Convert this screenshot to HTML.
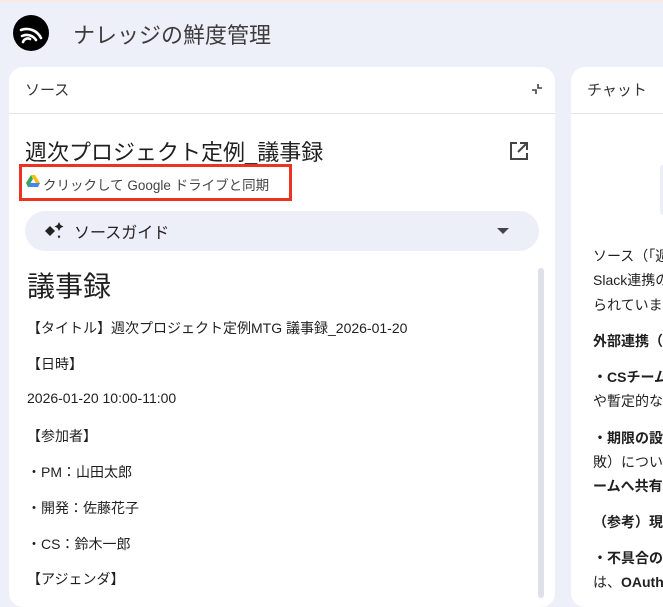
<!DOCTYPE html>
<html><head><meta charset="utf-8"><style>
*{margin:0;padding:0;box-sizing:border-box}
body{width:663px;height:587px;overflow:hidden;background:#eef0f9;font-family:"Liberation Sans","Noto Sans CJK JP",sans-serif;color:#1f1f1f;position:relative}
.a{position:absolute;white-space:nowrap}
.panel{position:absolute;background:#fff;border-radius:14px}
.t{font-size:14px;color:#1f1f1f}
</style></head><body>
<div class="a" style="left:0;top:0;width:663px;height:2px;background:#fbe9e4"></div>
<div class="a" style="left:13px;top:15px;width:36px;height:36px;border-radius:50%;background:#000;overflow:hidden">
<svg width="36" height="36" viewBox="0 0 36 36"><g fill="none" stroke="#fff" stroke-width="2.6" stroke-linecap="round"><path d="M10 27 A5 5 0 0 1 17 24"/><path d="M9 21 A11 11 0 0 1 23 25"/><path d="M8 15 A16 16 0 0 1 28 23"/></g></svg></div>
<div class="a" style="left:73px;top:18px;font-size:22px;color:#3c3c3c">ナレッジの鮮度管理</div>

<div class="panel" style="left:9px;top:67px;width:546px;height:540px"></div>
<div class="a" style="left:25px;top:79px;font-size:15px;color:#333">ソース</div>
<svg class="a" style="left:531px;top:83px" width="12" height="12" viewBox="0 0 12 12"><path d="M1 7h4v4M11 5H7V1" fill="none" stroke="#444" stroke-width="1.6"/></svg>
<div class="a" style="left:9px;top:113px;width:546px;height:1px;background:#e2e3ec"></div>
<div class="a" style="left:25px;top:135px;font-size:22px;color:#1f1f1f">週次プロジェクト定例_議事録</div>
<svg class="a" style="left:509px;top:141px" width="20" height="20" viewBox="0 0 20 20"><path d="M8 2H2v16h16v-6" fill="none" stroke="#444" stroke-width="2"/><path d="M11 2h7v7M18 2L9 11" fill="none" stroke="#444" stroke-width="2"/></svg>
<div class="a" style="left:19px;top:164px;width:273px;height:37px;border:3px solid #ea3323"></div>
<svg class="a" style="left:26px;top:175px" width="14" height="12" viewBox="0 0 14 12"><path d="M5 0h4l5 8h-4z" fill="#fbbc04"/><path d="M5 0L0 8l2 4 5-8z" fill="#34a853"/><path d="M2 12h10l2-4H4z" fill="#4285f4"/></svg>
<div class="a" style="left:43px;top:174px;font-size:13.5px;color:#444">クリックして Google ドライブと同期</div>
<div class="a" style="left:25px;top:211px;width:514px;height:40px;border-radius:20px;background:#eceef8"></div>
<svg class="a" style="left:43px;top:220px" width="22" height="22" viewBox="0 0 22 22"><path d="M7 6l5 5-5 5-5-5z" fill="#222"/><path d="M16 2l1.5 3 3 1.5-3 1.5L16 11l-1.5-3-3-1.5 3-1.5z" fill="#222"/><path d="M16 15l1.3 1.7L16 18.4l-1.3-1.7z" fill="#222"/></svg>
<div class="a" style="left:74px;top:219px;font-size:16px;color:#222">ソースガイド</div>
<div class="a" style="left:497px;top:228px;width:0;height:0;border-left:6px solid transparent;border-right:6px solid transparent;border-top:6px solid #444"></div>
<div class="a" style="left:538px;top:268px;width:6px;height:330px;border-radius:3px;background:#dfe1ea"></div>
<div class="a" style="left:27px;top:265px;font-size:28px;color:#1f1f1f">議事録</div>
<div class="a t" style="left:27px;top:318px">【タイトル】週次プロジェクト定例MTG 議事録_2026-01-20</div>
<div class="a t" style="left:27px;top:354px">【日時】</div>
<div class="a t" style="left:27px;top:390px">2026-01-20 10:00-11:00</div>
<div class="a t" style="left:27px;top:426px">【参加者】</div>
<div class="a t" style="left:27px;top:462px">・PM：山田太郎</div>
<div class="a t" style="left:27px;top:498px">・開発：佐藤花子</div>
<div class="a t" style="left:27px;top:534px">・CS：鈴木一郎</div>
<div class="a t" style="left:27px;top:569px">【アジェンダ】</div>

<div class="panel" style="left:571px;top:67px;width:120px;height:540px"></div>
<div class="a" style="left:587px;top:79px;font-size:15px;color:#333">チャット</div>
<div class="a" style="left:571px;top:113px;width:92px;height:1px;background:#e2e3ec"></div>
<div class="a" style="left:660px;top:164px;width:10px;height:52px;border-radius:6px;background:#eceef8"></div>
<div class="a t" style="left:593px;top:246px">ソース（「週</div>
<div class="a t" style="left:593px;top:270px">Slack連携の</div>
<div class="a t" style="left:593px;top:295px">られていま</div>
<div class="a t" style="left:593px;top:331px;font-weight:bold">外部連携（</div>
<div class="a t" style="left:593px;top:367px;font-weight:bold">・CSチーム</div>
<div class="a t" style="left:593px;top:391px">や暫定的な</div>
<div class="a t" style="left:593px;top:428px;font-weight:bold">・期限の設</div>
<div class="a t" style="left:593px;top:452px">敗）につい</div>
<div class="a t" style="left:593px;top:476px;font-weight:bold">ームへ共有</div>
<div class="a t" style="left:593px;top:512px;font-weight:bold">（参考）現</div>
<div class="a t" style="left:593px;top:548px;font-weight:bold">・不具合の</div>
<div class="a t" style="left:593px;top:572px">は、<b>OAuth</b></div>
</body></html>
